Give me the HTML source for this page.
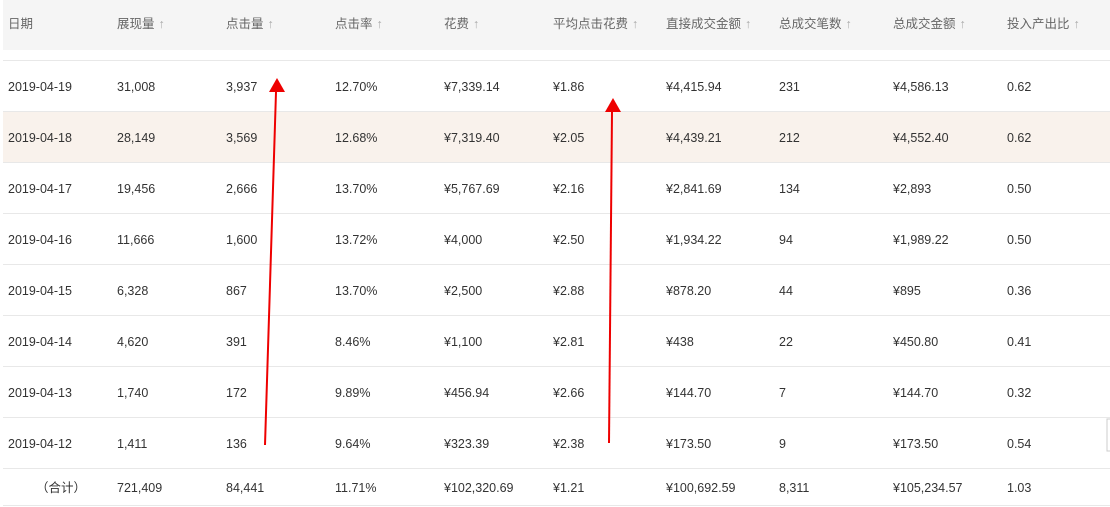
<!DOCTYPE html>
<html><head><meta charset="utf-8"><style>
body{margin:0;width:1110px;height:507px;background:#fff;font-family:"Liberation Sans","Noto Sans CJK SC",sans-serif;font-size:12.5px;color:#333;position:relative;overflow:hidden}
.hd{position:absolute;left:3px;top:0;width:1107px;height:50px;background:#f5f5f5}
.r{position:absolute;left:3px;width:1107px;height:50px;border-bottom:1px solid #e8e8e8}
.c{position:absolute;top:0;line-height:52px;white-space:nowrap}
.h .c{color:#666;line-height:48px}
.ar{color:#aaa;margin-left:4px}
</style></head><body>
<div class="hd"></div>
<div id="t"></div>
<svg width="1110" height="507" style="position:absolute;left:0;top:0">
<line x1="265" y1="445" x2="276" y2="92" stroke="#e00" stroke-width="2"/>
<polygon points="277,78 269,92 285,92" fill="#e00"/>
<line x1="609" y1="443" x2="612" y2="112" stroke="#e00" stroke-width="2"/>
<polygon points="613,98 605,112 621,112" fill="#e00"/>
<rect x="1107" y="419" width="5" height="32" fill="none" stroke="#ccc"/>
</svg>
<script>
var xs=[5,114,223,332,441,550,663,776,890,1004];
var H=["日期","展现量","点击量","点击率","花费","平均点击花费","直接成交金额","总成交笔数","总成交金额","投入产出比"];
var D=[
["2019-04-19","31,008","3,937","12.70%","¥7,339.14","¥1.86","¥4,415.94","231","¥4,586.13","0.62"],
["2019-04-18","28,149","3,569","12.68%","¥7,319.40","¥2.05","¥4,439.21","212","¥4,552.40","0.62"],
["2019-04-17","19,456","2,666","13.70%","¥5,767.69","¥2.16","¥2,841.69","134","¥2,893","0.50"],
["2019-04-16","11,666","1,600","13.72%","¥4,000","¥2.50","¥1,934.22","94","¥1,989.22","0.50"],
["2019-04-15","6,328","867","13.70%","¥2,500","¥2.88","¥878.20","44","¥895","0.36"],
["2019-04-14","4,620","391","8.46%","¥1,100","¥2.81","¥438","22","¥450.80","0.41"],
["2019-04-13","1,740","172","9.89%","¥456.94","¥2.66","¥144.70","7","¥144.70","0.32"],
["2019-04-12","1,411","136","9.64%","¥323.39","¥2.38","¥173.50","9","¥173.50","0.54"]];
var s='<div class="r h" style="top:0;border:none">';
H.forEach(function(h,i){s+='<div class="c" style="left:'+xs[i]+'px">'+h+(i?'<span class="ar">↑</span>':'')+'</div>'});
s+='</div><div style="position:absolute;left:3px;top:60px;width:1107px;border-top:1px solid #e8e8e8"></div>';
D.forEach(function(r,j){s+='<div class="r" style="top:'+(61+j*51)+'px;'+(j==1?'background:#f9f2ec':'')+'">';
r.forEach(function(v,i){s+='<div class="c" style="left:'+xs[i]+'px">'+v+'</div>'});s+='</div>'});
var T=["（合计）","721,409","84,441","11.71%","¥102,320.69","¥1.21","¥100,692.59","8,311","¥105,234.57","1.03"];
s+='<div class="r" style="top:469px;height:36px">';
T.forEach(function(v,i){s+='<div class="c" style="line-height:38px;left:'+(i?xs[i]:33)+'px">'+v+'</div>'});s+='</div>';
document.getElementById('t').innerHTML=s;
</script>
</body></html>
